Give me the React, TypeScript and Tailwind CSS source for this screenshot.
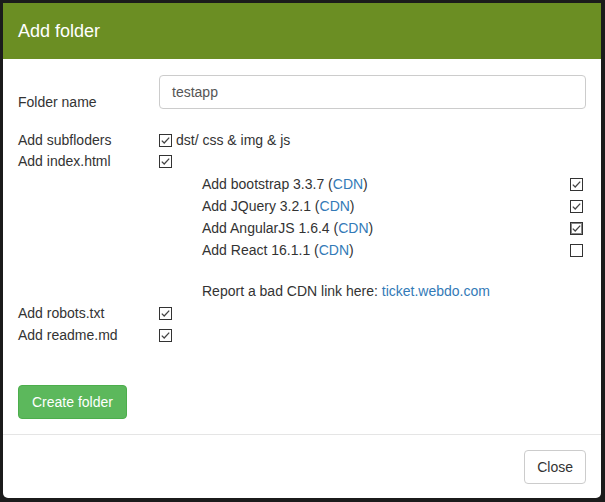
function Check({ checked = true, focus = false }: { checked?: boolean; focus?: boolean }) {
  return (
    <svg width="13" height="13" viewBox="0 0 13 13" className="block shrink-0">
      <rect x="0.5" y="0.5" width="12" height="12" fill="#fff" stroke="#333" />
      {focus && (
        <rect x="1.5" y="1.5" width="10" height="10" fill="none" stroke="#111" strokeDasharray="1 1" />
      )}
      {checked && (
        <polyline points="2.8,6.6 5.2,9 10.2,3.6" fill="none" stroke="#444" strokeWidth="1.3" />
      )}
    </svg>
  );
}

const cdnLibs = [
  { name: 'Add bootstrap 3.3.7', checked: true },
  { name: 'Add JQuery 3.2.1', checked: true },
  { name: 'Add AngularJS 1.6.4', checked: true, focus: true },
  { name: 'Add React 16.1.1', checked: false },
];

export default function App() {
  return (
    <div
      className="w-[605px] h-[502px] bg-[#1b1b1b] overflow-hidden text-[14px] text-[#333]"
      style={{ fontFamily: '"Liberation Sans", Arial, sans-serif' }}
    >
      <div className="ml-[3px] mt-[3px] w-[598px] h-[495px] bg-white rounded-b-[5px] flex flex-col">
        <div className="h-[56px] bg-[#6b8e23] px-[15px] flex items-center">
          <h4 className="text-[18px] text-white leading-[26px]">Add folder</h4>
        </div>

        <div className="h-[375px] px-[15px] pt-[16px]">
          <div className="grid grid-cols-[141px_1fr] items-end">
            <label className="leading-[20px] mb-[-3px]">Folder name</label>
            <div className="h-[34px] border border-[#ccc] rounded-[4px] px-[12px] flex items-center text-[#555]">
              testapp
            </div>
          </div>

          <div className="mt-[21px] grid grid-cols-[141px_1fr] leading-[21px]">
            <div>Add subfloders</div>
            <div className="flex items-center gap-[4px]">
              <Check />
              <span>dst/ css &amp; img &amp; js</span>
            </div>
            <div>Add index.html</div>
            <div className="flex items-center">
              <Check />
            </div>
          </div>

          <div className="pl-[184px] pr-[3px] mt-[1px]">
            {cdnLibs.map((lib) => (
              <div key={lib.name} className="h-[22px] flex items-center justify-between">
                <span>
                  {lib.name} (<span className="text-[#337ab7]">CDN</span>)
                </span>
                <Check checked={lib.checked} focus={lib.focus} />
              </div>
            ))}
            <div className="h-[20px]" />
            <div className="h-[20px] leading-[20px]">
              Report a bad CDN link here: <span className="text-[#337ab7]">ticket.webdo.com</span>
            </div>
          </div>

          <div className="grid grid-cols-[141px_1fr] mt-[1px]">
            <div className="h-[22px] leading-[22px]">Add robots.txt</div>
            <div className="flex items-center">
              <Check />
            </div>
            <div className="h-[22px] leading-[22px]">Add readme.md</div>
            <div className="flex items-center">
              <Check />
            </div>
          </div>

          <button className="mt-[39px] h-[34px] px-[13px] rounded-[4px] bg-[#5cb85c] border border-[#4cae4c] text-white">
            Create folder
          </button>
        </div>

        <div className="border-t border-[#e5e5e5] px-[15px] pt-[15px] flex justify-end">
          <button className="h-[34px] px-[12px] rounded-[4px] bg-white border border-[#ccc] text-[#333]">
            Close
          </button>
        </div>
      </div>
    </div>
  );
}
